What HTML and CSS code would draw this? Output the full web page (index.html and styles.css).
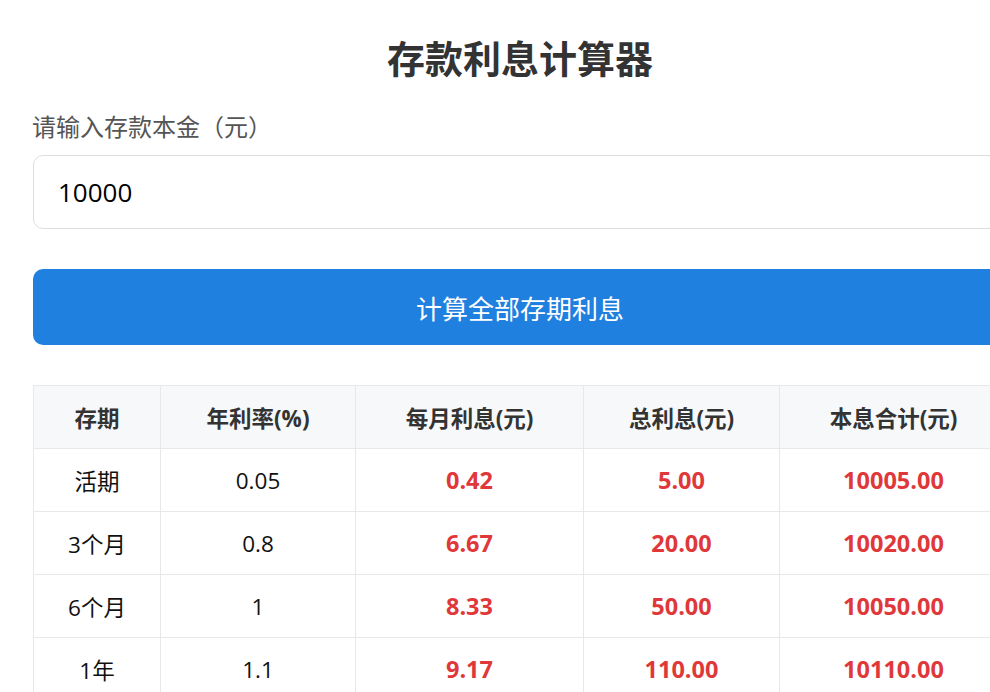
FILE: index.html
```html
<!DOCTYPE html>
<html lang="zh-CN">
<head>
<meta charset="utf-8">
<title>存款利息计算器</title>
<link rel="stylesheet" href="styles.css">
</head>
<body>
<div class="container">
  <h1 class="title">存款利息计算器</h1>
  <label class="label" for="principal">请输入存款本金（元）</label>
  <input class="amount" id="principal" type="text" value="10000">
  <button class="calc-btn">计算全部存期利息</button>
  <table class="result">
    <colgroup>
      <col class="c1"><col class="c2"><col class="c3"><col class="c4"><col class="c5">
    </colgroup>
    <thead>
      <tr><th>存期</th><th>年利率(%)</th><th>每月利息(元)</th><th>总利息(元)</th><th>本息合计(元)</th></tr>
    </thead>
    <tbody>
      <tr><td>活期</td><td>0.05</td><td class="hl">0.42</td><td class="hl">5.00</td><td class="hl">10005.00</td></tr>
      <tr><td>3个月</td><td>0.8</td><td class="hl">6.67</td><td class="hl">20.00</td><td class="hl">10020.00</td></tr>
      <tr><td>6个月</td><td>1</td><td class="hl">8.33</td><td class="hl">50.00</td><td class="hl">10050.00</td></tr>
      <tr><td>1年</td><td>1.1</td><td class="hl">9.17</td><td class="hl">110.00</td><td class="hl">10110.00</td></tr>
    </tbody>
  </table>
</div>
</body>
</html>
```

FILE: styles.css
```css
html, body {
  margin: 0;
  padding: 0;
  overflow: hidden;
  background: #fff;
}
body {
  font-family: "Open Sans", "Noto Sans CJK SC", sans-serif;
  color: #333;
}
.container {
  width: 974px;
  margin-left: 33px;
  padding-top: 32px;
  display: flex;
  flex-direction: column;
}
.title {
  margin: 0;
  font-family: "Noto Sans CJK SC", sans-serif;
  font-size: 38px;
  line-height: 50px;
  font-weight: 700;
  text-align: center;
  color: #333;
}
.label {
  margin-top: 29px;
  margin-left: -1px;
  font-family: "Noto Sans CJK SC", sans-serif;
  font-size: 24px;
  line-height: 30px;
  color: #555;
}
.amount {
  margin-top: 14px;
  box-sizing: border-box;
  height: 74px;
  width: 100%;
  padding: 0 24px;
  border: 1px solid #ddd;
  border-radius: 10px;
  font-family: "Open Sans", "Noto Sans CJK SC", sans-serif;
  font-size: 26px;
  color: #000;
  outline: none;
}
.calc-btn {
  margin-top: 40px;
  height: 76px;
  width: 100%;
  border: none;
  border-radius: 10px;
  background: #1f80e0;
  color: #fff;
  font-family: "Noto Sans CJK SC", sans-serif;
  font-size: 26px;
  font-weight: 400;
}
.result {
  margin-top: 40px;
  width: 974px;
  border-collapse: collapse;
  table-layout: fixed;
}
.c1 { width: 127px; }
.c2 { width: 195px; }
.c3 { width: 228px; }
.c4 { width: 196px; }
.c5 { width: 228px; }
.result th, .result td {
  border: 1px solid #e8e8e8;
  text-align: center;
  font-size: 22.5px;
  padding: 0;
}
.result th {
  height: 62px;
  background: #f6f8fa;
  font-weight: 700;
  color: #333;
}
.result td {
  height: 62px;
  color: #111;
}
.result td.hl {
  color: #e0383a;
  font-weight: 700;
  font-size: 23.5px;
}
```
